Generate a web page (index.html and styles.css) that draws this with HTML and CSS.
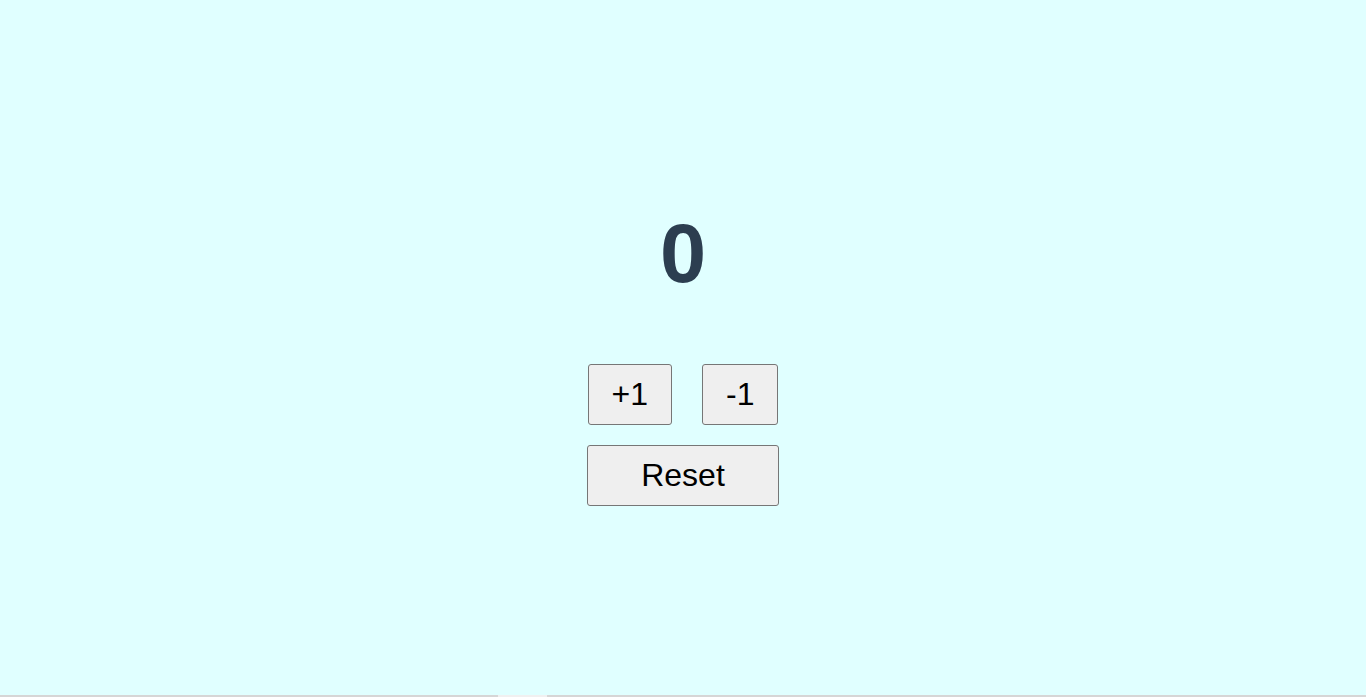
FILE: index.html
```html
<!DOCTYPE html>
<html>
<head>
<meta charset="utf-8">
<link rel="stylesheet" href="styles.css">
</head>
<body>
<main class="counter">
  <h1 class="count">0</h1>
  <div class="row">
    <button class="btn">+1</button>
    <button class="btn">-1</button>
  </div>
  <button class="btn reset">Reset</button>
</main>
<div class="scrollbar"><div class="thumb"></div></div>
</body>
</html>
```
FILE: styles.css
```css
html, body {
  margin: 0;
  padding: 0;
}
body {
  background: #e0ffff;
  font-family: "Liberation Sans", Arial, sans-serif;
  height: 697px;
  overflow: hidden;
}
.counter {
  display: flex;
  flex-direction: column;
  align-items: center;
  padding-top: 206px;
}
.count {
  margin: 0;
  font-size: 83px;
  font-weight: bold;
  color: #2c3e50;
  line-height: 95px;
}
.row {
  display: flex;
  gap: 30px;
  margin-top: 63px;
}
.btn {
  box-sizing: border-box;
  height: 61px;
  padding: 0 23px;
  font-family: "Liberation Sans", Arial, sans-serif;
  font-size: 32px;
  color: #000;
  background: #efefef;
  border: 1px solid #767676;
  border-radius: 3px;
}
.reset {
  width: 192px;
  margin-top: 20px;
}
.scrollbar {
  position: fixed;
  left: 0;
  right: 0;
  bottom: 0;
  height: 2px;
  background: #d6d6d6;
}
.thumb {
  margin-left: 498px;
  width: 49px;
  height: 2px;
  background: #f0f0f0;
}
```
